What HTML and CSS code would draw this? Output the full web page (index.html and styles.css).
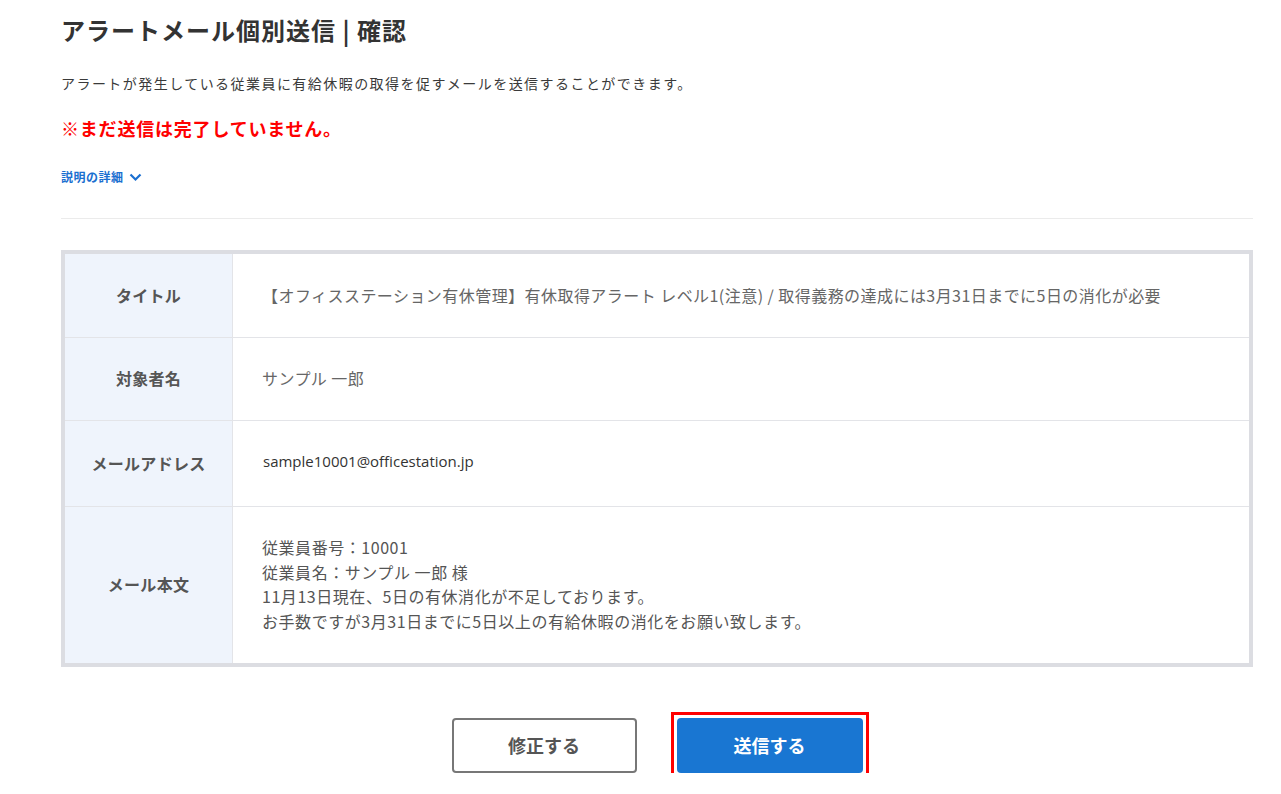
FILE: index.html
```html
<!DOCTYPE html>
<html lang="ja">
<head>
<meta charset="utf-8">
<title>アラートメール個別送信 | 確認</title>
<link rel="stylesheet" href="styles.css">
</head>
<body>
<div class="page">
  <h1 class="title">アラートメール個別送信 | 確認</h1>
  <p class="desc">アラートが発生している従業員に有給休暇の取得を促すメールを送信することができます。</p>
  <p class="warn">※まだ送信は完了していません。</p>
  <div class="details">説明の詳細
    <svg class="chev" width="13" height="9" viewBox="0 0 13 9"><polyline points="1.5,1.5 6.5,6.5 11.5,1.5" fill="none" stroke="#1a6fd0" stroke-width="2.2"/></svg>
  </div>
  <hr class="sep">
  <div class="table">
    <div class="row r1">
      <div class="th">タイトル</div>
      <div class="td">【オフィスステーション有休管理】有休取得アラート レベル1(注意) / 取得義務の達成には3月31日までに5日の消化が必要</div>
    </div>
    <div class="row r2">
      <div class="th">対象者名</div>
      <div class="td">サンプル 一郎</div>
    </div>
    <div class="row r3">
      <div class="th">メールアドレス</div>
      <div class="td email">sample10001@officestation.jp</div>
    </div>
    <div class="row r4">
      <div class="th">メール本文</div>
      <div class="td body">従業員番号：10001<br>従業員名：サンプル 一郎 様<br>11月13日現在、5日の有休消化が不足しております。<br>お手数ですが3月31日までに5日以上の有給休暇の消化をお願い致します。</div>
    </div>
  </div>
  <div class="actions">
    <button class="btn btn-sub">修正する</button>
    <span class="highlight"><button class="btn btn-main">送信する</button></span>
  </div>
</div>
</body>
</html>
```
FILE: styles.css
```css
html, body {
  margin: 0;
  padding: 0;
  background: #fff;
}
body {
  font-family: "Noto Sans CJK JP", "Noto Sans", sans-serif;
  color: #333;
}
.page {
  width: 1192px;
  margin-left: 61px;
  padding-top: 12px;
}
.title {
  margin: 0;
  font-size: 24px;
  line-height: 36px;
  font-weight: 700;
  color: #333;
  letter-spacing: 1px;
}
.desc {
  margin: 25px 0 0;
  font-size: 14px;
  line-height: 20px;
  color: #3a3a3a;
  letter-spacing: 1.45px;
}
.warn {
  margin: 22px 0 0;
  font-size: 18px;
  line-height: 26px;
  font-weight: 700;
  color: #ff0000;
  letter-spacing: 0.8px;
}
.details {
  margin-top: 27px;
  font-size: 12px;
  line-height: 18px;
  font-weight: 700;
  color: #1a6fd0;
  letter-spacing: 0.5px;
  display: flex;
  align-items: center;
  gap: 5px;
}
.chev { display: block; }
.sep {
  margin: 32px 0 0;
  border: 0;
  border-top: 1px solid #ebebeb;
  height: 0;
}
.table {
  margin-top: 31px;
  border: 4px solid #dcdde2;
}
.row {
  display: flex;
  border-bottom: 1px solid #e3e4e8;
}
.row.r4 { border-bottom: 0; }
.r1 { height: 83px; }
.r2 { height: 82px; }
.r3 { height: 85px; }
.r4 { height: 156px; }
.th {
  width: 167px;
  flex: none;
  background: #eff4fc;
  border-right: 1px solid #e3e4e8;
  display: flex;
  align-items: center;
  justify-content: center;
  font-size: 16px;
  font-weight: 700;
  color: #555;
  letter-spacing: 0.3px;
  padding-bottom: 2px;
}
.td {
  flex: 1;
  display: flex;
  align-items: center;
  padding-left: 29px;
  padding-bottom: 2px;
  font-size: 16px;
  color: #666;
  letter-spacing: 0.45px;
}
.td.email {
  font-family: "Open Sans", "Noto Sans CJK JP", sans-serif;
  font-size: 15px;
  color: #333;
  letter-spacing: 0;
  padding-left: 30px;
  padding-bottom: 5px;
}
.td.body {
  line-height: 24.5px;
  color: #555;
  letter-spacing: 0.55px;
  padding-top: 0;
  padding-bottom: 2px;
}
.actions {
  margin-top: 51px;
  display: flex;
  justify-content: center;
  gap: 40px;
}
.btn {
  width: 185px;
  height: 55px;
  border-radius: 4px;
  font-family: "Noto Sans CJK JP", sans-serif;
  font-size: 18px;
  font-weight: 700;
  cursor: pointer;
  display: flex;
  align-items: center;
  justify-content: center;
  padding-bottom: 2px;
}
.btn-sub {
  background: #fff;
  border: 2px solid #777;
  color: #555;
}
.btn-main {
  width: 186px;
  background: #1976d2;
  border: 0;
  color: #fff;
}
.highlight {
  display: block;
  outline: 3px solid #ff0000;
  outline-offset: 3px;
}
```
